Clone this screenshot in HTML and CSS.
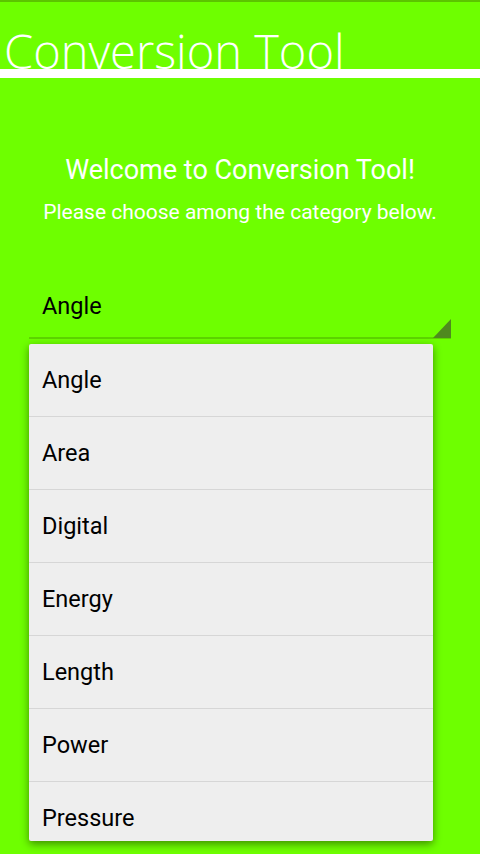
FILE: index.html
```html
<!DOCTYPE html>
<html lang="en">
<head>
    <meta charset="UTF-8">
    <meta name="viewport" content="width=device-width, initial-scale=1.0">
    <title>Conversion Tool</title>
    <link rel="stylesheet" href="styles.css">
</head>
<body>
    <!-- Top edge -->
    <div class="topline"></div>

    <!-- Header -->
    <header class="header">
        <h1 class="title">Conversion Tool</h1>
    </header>
    <div class="title-bar"></div>

    <!-- Welcome -->
    <section class="welcome">
        <p class="welcome-main">Welcome to Conversion Tool!</p>
        <p class="welcome-sub">Please choose among the category below.</p>
    </section>

    <!-- Category spinner -->
    <div class="spinner">
        <div class="spinner-value">Angle</div>
        <svg class="spinner-arrow" width="18" height="19" viewBox="0 0 18 19">
            <polygon points="18,0 18,19 0,19" fill="#4f8a1f"/>
        </svg>

        <!-- Open dropdown -->
        <ul class="dropdown">
            <li>Angle</li>
            <li>Area</li>
            <li>Digital</li>
            <li>Energy</li>
            <li>Length</li>
            <li>Power</li>
            <li>Pressure</li>
        </ul>
    </div>
</body>
</html>
```

FILE: styles.css
```css
/* General Styles */
body {
    font-family: Roboto, "Noto Sans", sans-serif;
    margin: 0;
    padding: 0;
    background-color: #6eff00;
    height: 854px;
    overflow: hidden;
}

.topline {
    height: 2px;
    background-color: #5cc400;
}

/* Header Styles */
.header {
    height: 67px;
    overflow: hidden;
    display: flex;
    align-items: flex-end;
}

.title {
    margin: 0 0 -6px 4px;
    font-family: "Open Sans", sans-serif;
    font-weight: 300;
    font-size: 47px;
    line-height: 1;
    color: #fff;
}

.title-bar {
    height: 9px;
    background-color: #fff;
}

/* Welcome Styles */
.welcome {
    text-align: center;
    color: #fff;
    padding-top: 77px;
}

.welcome p {
    margin: 0;
}

.welcome-main {
    font-size: 27px;
    line-height: 30px;
}

.welcome .welcome-sub {
    font-size: 21px;
    line-height: 24px;
    margin-top: 15px;
}

/* Spinner Styles */
.spinner {
    position: relative;
    margin: 58px 29px 0 29px;
    height: 55px;
    border-bottom: 2px solid #5dd400;
}

.spinner-value {
    padding: 10px 0 0 13px;
    font-size: 23.5px;
    color: #000;
}

.spinner-arrow {
    position: absolute;
    right: 0;
    bottom: -1px;
}

/* Dropdown Styles */
.dropdown {
    position: absolute;
    top: 62px;
    left: 0;
    width: 404px;
    height: 497px;
    margin: 0;
    padding: 0;
    list-style-type: none;
    background-color: #eeeeee;
    border-radius: 2px;
    box-shadow: 0 3px 8px rgba(0, 0, 0, 0.45);
    overflow: hidden;
}

.dropdown li {
    height: 72px;
    border-bottom: 1px solid #d6d6d6;
    padding-left: 13px;
    font-size: 23.5px;
    color: #000;
    display: flex;
    align-items: center;
}
```
